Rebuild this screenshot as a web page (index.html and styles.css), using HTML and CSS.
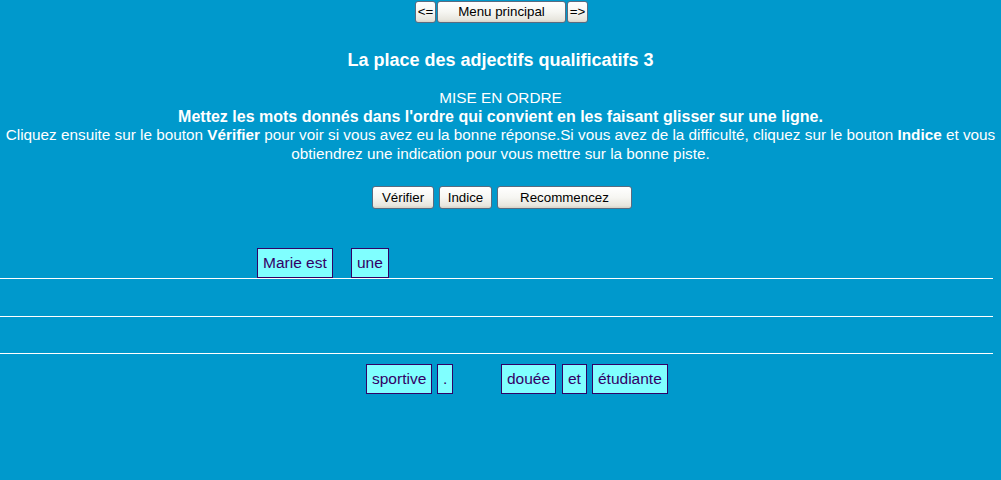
FILE: index.html
```html
<!DOCTYPE html>
<html lang="fr">
<head>
<meta charset="utf-8">
<title>La place des adjectifs qualificatifs 3</title>
<link rel="stylesheet" href="styles.css">
</head>
<body>
<div class="nav">
  <button class="btn btn-arrow">&lt;=</button>
  <button class="btn btn-menu">Menu principal</button>
  <button class="btn btn-arrow">=&gt;</button>
</div>
<h1 class="title">La place des adjectifs qualificatifs 3</h1>
<div class="instructions">
  <div>MISE EN ORDRE</div>
  <div class="strong">Mettez les mots donnés dans l'ordre qui convient en les faisant glisser sur une ligne.</div>
  <div>Cliquez ensuite sur le bouton <b>Vérifier</b> pour voir si vous avez eu la bonne réponse.Si vous avez de la difficulté, cliquez sur le bouton <b>Indice</b> et vous <span>obtiendrez une indication pour vous mettre sur la bonne piste.</span></div>
</div>
<div class="actions">
  <button class="btn btn-check">Vérifier</button>
  <button class="btn btn-hint">Indice</button>
  <button class="btn btn-restart">Recommencez</button>
</div>
<div class="canvas">
  <div class="line line-1"></div>
  <div class="line line-2"></div>
  <div class="line line-3"></div>
  <div class="tile" style="left:257px;top:18px">Marie est</div>
  <div class="tile" style="left:351px;top:18px">une</div>
  <div class="tile" style="left:366px;top:134px">sportive</div>
  <div class="tile" style="left:437px;top:134px">.</div>
  <div class="tile" style="left:501px;top:134px">douée</div>
  <div class="tile" style="left:562px;top:134px">et</div>
  <div class="tile" style="left:592px;top:134px">étudiante</div>
</div>
</body>
</html>
```
FILE: styles.css
```css
html, body {
  margin: 0;
  padding: 0;
}
body {
  background: #0099cc;
  color: #ffffff;
  font-family: "Liberation Sans", Arial, sans-serif;
  width: 1001px;
  height: 480px;
  overflow: hidden;
}
.nav {
  display: flex;
  justify-content: center;
  gap: 1px;
  padding-top: 1px;
  padding-left: 2px;
}
.btn {
  font-family: "Liberation Sans", Arial, sans-serif;
  font-size: 13.33px;
  color: #000000;
  height: 22px;
  padding: 0;
  border: 1px solid #5a6b80;
  border-radius: 3px;
  background: linear-gradient(#ffffff 0%, #f6f6f2 50%, #e8e6de 88%, #d6d2c6 100%);
  line-height: 20px;
  text-align: center;
}
.btn-arrow {
  width: 21px;
}
.btn-menu {
  width: 129px;
}
.title {
  margin: 0;
  padding-top: 27px;
  font-size: 18px;
  font-weight: bold;
  text-align: center;
  line-height: 20px;
}
.instructions {
  margin-top: 19px;
  padding: 0 4px;
  font-size: 15.3px;
  line-height: 18.7px;
  text-align: center;
}
.instructions .strong {
  font-size: 16px;
  font-weight: bold;
}
.actions {
  display: flex;
  justify-content: center;
  gap: 5px;
  margin-top: 22px;
  padding-left: 3px;
}
.actions .btn {
  height: 23px;
  line-height: 21px;
}
.btn-check {
  width: 62px;
}
.btn-hint {
  width: 53px;
}
.btn-restart {
  width: 135px;
}
.canvas {
  position: relative;
  height: 250px;
  margin-top: 21px;
  padding-top: 48px;
  box-sizing: border-box;
}
.line {
  width: 993px;
  border-top: 1px solid #ffffff;
}
.line-2 {
  margin-top: 37px;
}
.line-3 {
  margin-top: 36px;
}
.tile {
  position: absolute;
  height: 28px;
  line-height: 28px;
  padding: 0 5px;
  background: #80ffff;
  border: 1px solid #330066;
  color: #330066;
  font-size: 15.5px;
  white-space: nowrap;
}
```
